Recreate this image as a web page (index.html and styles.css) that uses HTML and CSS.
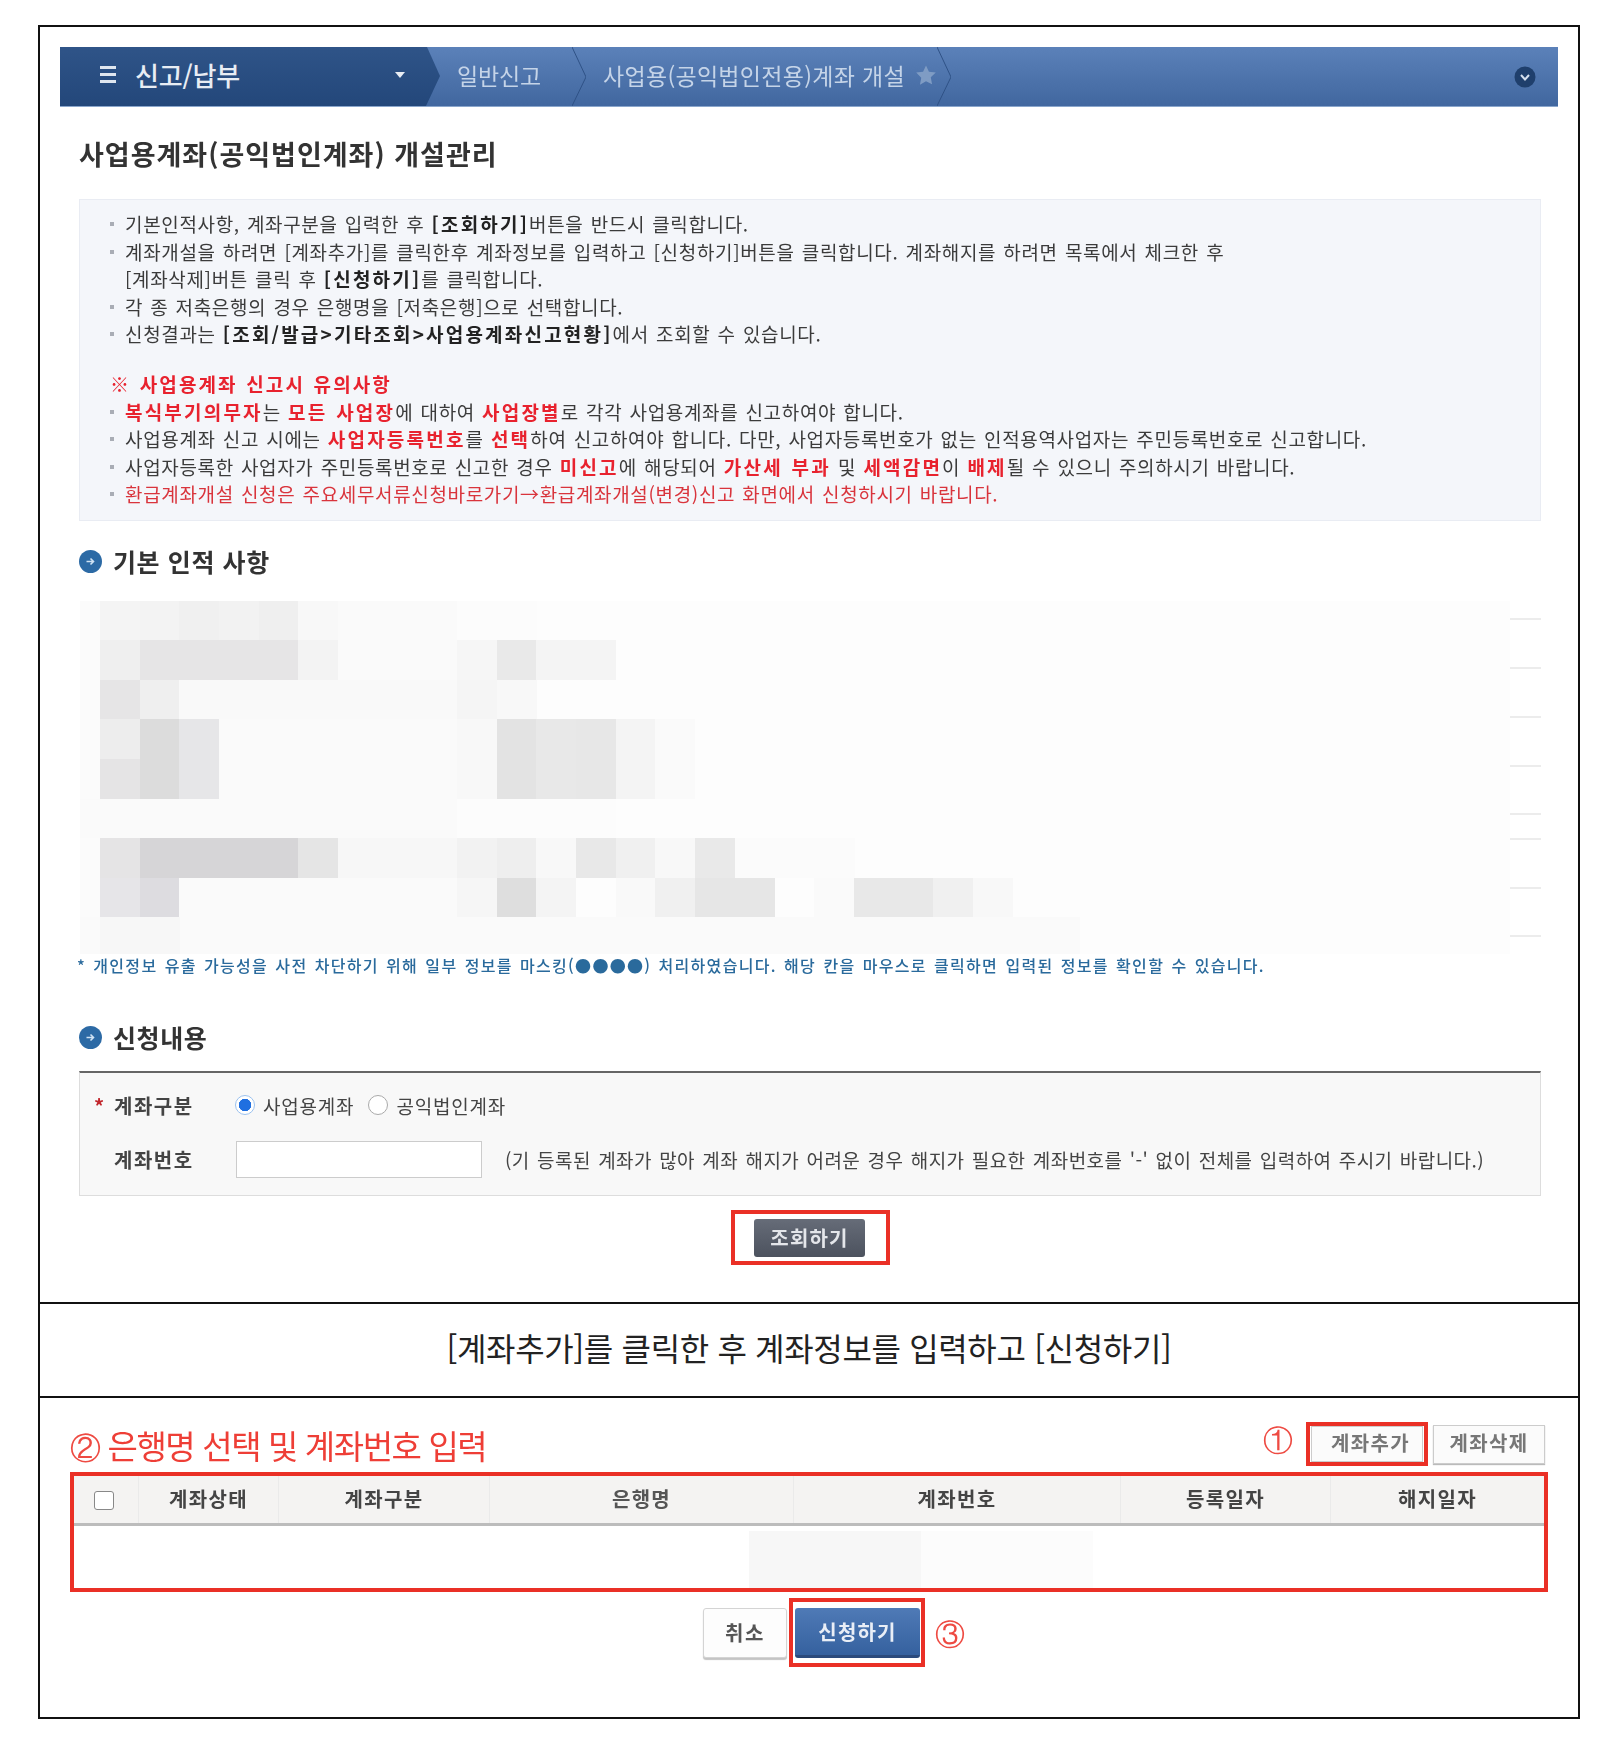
FILE: index.html
```html
<!DOCTYPE html>
<html lang="ko">
<head>
    <meta charset="UTF-8">
    <title>사업용계좌 개설관리</title>
    <link rel="stylesheet" href="styles.css">
</head>
<body>

    <div class="sheet">

        <!-- 조회 화면 -->
        <section class="panel panel-top">
            <nav class="nav">
                <div class="nav-head">
                    <span class="nav-burger"><i></i><i></i><i></i></span>
                    <span class="nav-title">신고/납부</span>
                    <span class="nav-caret"></span>
                </div>
                <div class="crumb crumb-one">
                    <span>일반신고</span>
                    <svg class="chev" viewBox="0 0 14 59"><path d="M0 0 L14 30 L0 59" fill="none" stroke="#2f5286" stroke-width="1"/></svg>
                </div>
                <div class="crumb crumb-two">
                    <span>사업용(공익법인전용)계좌 개설</span>
                    <svg class="star" viewBox="0 0 24 24"><path d="M12 1.5l3.2 6.9 7.5.9-5.5 5.2 1.4 7.5L12 18.8l-6.6 3.7 1.4-7.5L1.3 9.3l7.5-.9z" fill="#7f9cc4"/></svg>
                    <svg class="chev" viewBox="0 0 14 59"><path d="M0 0 L14 30 L0 59" fill="none" stroke="#2f5286" stroke-width="1"/></svg>
                </div>
                <span class="nav-toggle">
                    <svg viewBox="0 0 22 22"><circle cx="11" cy="11" r="10.5" fill="#1f3f6c"/><path d="M7 9l4 4.5L15 9" fill="none" stroke="#d5e0ee" stroke-width="2"/></svg>
                </span>
            </nav>

            <h1 class="page-title">사업용계좌(공익법인계좌) 개설관리</h1>

            <div class="info">
                <ul class="info-list">
                    <li>기본인적사항, 계좌구분을 입력한 후 <b>[조회하기]</b>버튼을 반드시 클릭합니다.</li>
                    <li>계좌개설을 하려면 [계좌추가]를 클릭한후 계좌정보를 입력하고 [신청하기]버튼을 클릭합니다. 계좌해지를 하려면 목록에서 체크한 후<br>[계좌삭제]버튼 클릭 후 <b>[신청하기]</b>를 클릭합니다.</li>
                    <li>각 종 저축은행의 경우 은행명을 [저축은행]으로 선택합니다.</li>
                    <li>신청결과는 <b>[조회/발급&gt;기타조회&gt;사업용계좌신고현황]</b>에서 조회할 수 있습니다.</li>
                </ul>
                <p class="info-head">※ 사업용계좌 신고시 유의사항</p>
                <ul class="info-list">
                    <li><em>복식부기의무자</em>는 <em>모든 사업장</em>에 대하여 <em>사업장별</em>로 각각 사업용계좌를 신고하여야 합니다.</li>
                    <li>사업용계좌 신고 시에는 <em>사업자등록번호</em>를 <em>선택</em>하여 신고하여야 합니다. 다만, 사업자등록번호가 없는 인적용역사업자는 주민등록번호로 신고합니다.</li>
                    <li>사업자등록한 사업자가 주민등록번호로 신고한 경우 <em>미신고</em>에 해당되어 <em>가산세 부과</em> 및 <em>세액감면</em>이 <em>배제</em>될 수 있으니 주의하시기 바랍니다.</li>
                    <li class="red-line">환급계좌개설 신청은 주요세무서류신청바로가기→환급계좌개설(변경)신고 화면에서 신청하시기 바랍니다.</li>
                </ul>
            </div>

            <h2 class="sec-title sec-first">
                <svg class="sec-icon" viewBox="0 0 23 23"><circle cx="11.5" cy="11.5" r="11.5" fill="#2c6aa5"/><path d="M7.5 11.5h7M11.5 8.5l3 3-3 3" fill="none" stroke="#cfe2f3" stroke-width="1.6"/></svg>
                기본 인적 사항
            </h2>

            <!-- 모자이크 처리된 인적사항 -->
            <svg class="mosaic" viewBox="0 0 1462 353">
                <rect x="1" width="1430" height="353" fill="#fdfdfd"/>
                <rect x="1" width="20" height="353" fill="#fbfbfb"/>
                <g fill="#f4f4f4"><rect x="21" y="0" width="40" height="39"/></g>
                <rect x="61" y="0" width="40" height="39" fill="#f3f3f3"/>
                <rect x="100" y="0" width="40" height="39" fill="#f0f0f0"/>
                <rect x="140" y="0" width="40" height="39" fill="#f2f2f2"/>
                <rect x="180" y="0" width="40" height="39" fill="#efefef"/>
                <rect x="219" y="0" width="40" height="39" fill="#f8f8f8"/>
                <rect x="259" y="0" width="120" height="39" fill="#fafafa"/>
                <rect x="378" y="0" width="80" height="39" fill="#fcfcfc"/>

                <rect x="21" y="39" width="40" height="40" fill="#efefef"/>
                <rect x="61" y="39" width="159" height="40" fill="#e6e5e6"/>
                <rect x="219" y="39" width="40" height="40" fill="#f3f3f3"/>
                <rect x="259" y="39" width="120" height="40" fill="#fafafa"/>
                <rect x="378" y="39" width="40" height="40" fill="#f6f6f6"/>
                <rect x="418" y="39" width="40" height="40" fill="#e9e9e9"/>
                <rect x="457" y="39" width="80" height="40" fill="#f4f4f4"/>

                <rect x="21" y="79" width="40" height="39" fill="#e6e5e6"/>
                <rect x="61" y="79" width="40" height="39" fill="#efefef"/>
                <rect x="100" y="79" width="279" height="39" fill="#f9f9f9"/>
                <rect x="378" y="79" width="40" height="39" fill="#f5f5f5"/>
                <rect x="418" y="79" width="40" height="39" fill="#f8f8f8"/>

                <rect x="21" y="118" width="40" height="40" fill="#ededed"/>
                <rect x="21" y="158" width="40" height="40" fill="#e5e4e5"/>
                <rect x="61" y="118" width="40" height="80" fill="#dcdcdc"/>
                <rect x="100" y="118" width="40" height="80" fill="#e6e6e8"/>
                <rect x="140" y="118" width="239" height="80" fill="#fafafa"/>
                <rect x="378" y="118" width="40" height="80" fill="#f8f8f8"/>
                <rect x="418" y="118" width="40" height="80" fill="#e3e3e3"/>
                <rect x="457" y="118" width="40" height="80" fill="#e8e8e8"/>
                <rect x="497" y="118" width="40" height="80" fill="#e7e7e7"/>
                <rect x="537" y="118" width="40" height="80" fill="#f4f4f4"/>
                <rect x="576" y="118" width="40" height="80" fill="#fafafa"/>

                <rect x="1" y="198" width="378" height="39" fill="#fafafa"/>
                <rect x="378" y="198" width="159" height="39" fill="#fcfcfc"/>

                <rect x="21" y="237" width="40" height="40" fill="#e5e4e5"/>
                <rect x="61" y="237" width="159" height="40" fill="#d6d5d7"/>
                <rect x="219" y="237" width="40" height="40" fill="#e5e5e5"/>
                <rect x="259" y="237" width="120" height="40" fill="#f7f7f7"/>
                <rect x="378" y="237" width="40" height="40" fill="#f2f2f2"/>
                <rect x="418" y="237" width="40" height="40" fill="#eeeeee"/>
                <rect x="457" y="237" width="40" height="40" fill="#f8f8f8"/>
                <rect x="497" y="237" width="40" height="40" fill="#e8e8e8"/>
                <rect x="537" y="237" width="40" height="40" fill="#f0f0f0"/>
                <rect x="576" y="237" width="40" height="40" fill="#f8f8f8"/>
                <rect x="616" y="237" width="40" height="40" fill="#e9e9e9"/>
                <rect x="656" y="237" width="120" height="40" fill="#fbfbfb"/>

                <rect x="21" y="277" width="40" height="39" fill="#e6e5e8"/>
                <rect x="61" y="277" width="40" height="39" fill="#dddce0"/>
                <rect x="100" y="277" width="279" height="39" fill="#fafafa"/>
                <rect x="378" y="277" width="40" height="39" fill="#f6f6f6"/>
                <rect x="418" y="277" width="40" height="39" fill="#dedede"/>
                <rect x="457" y="277" width="40" height="39" fill="#f4f4f4"/>
                <rect x="537" y="277" width="40" height="39" fill="#f9f9f9"/>
                <rect x="576" y="277" width="40" height="39" fill="#f0f0f0"/>
                <rect x="616" y="277" width="80" height="39" fill="#e6e6e6"/>
                <rect x="735" y="277" width="40" height="39" fill="#fafafa"/>
                <rect x="775" y="277" width="79" height="39" fill="#e8e8e8"/>
                <rect x="854" y="277" width="40" height="39" fill="#f0f0f0"/>
                <rect x="894" y="277" width="40" height="39" fill="#f8f8f8"/>

                <rect x="1" y="316" width="1000" height="37" fill="#fafafa"/>
                <rect x="21" y="316" width="80" height="37" fill="#f7f7f7"/>

                <g stroke="#e6e6e6" stroke-width="1.5">
                    <path d="M1431 18h31M1431 67h31M1431 116h31M1431 165h31M1431 213h31M1431 238h31M1431 287h31M1431 335h31"/>
                </g>
            </svg>

            <p class="mask-note">* 개인정보 유출 가능성을 사전 차단하기 위해 일부 정보를 마스킹(●●●●) 처리하였습니다. 해당 칸을 마우스로 클릭하면 입력된 정보를 확인할 수 있습니다.</p>

            <h2 class="sec-title sec-second">
                <svg class="sec-icon" viewBox="0 0 23 23"><circle cx="11.5" cy="11.5" r="11.5" fill="#2c6aa5"/><path d="M7.5 11.5h7M11.5 8.5l3 3-3 3" fill="none" stroke="#cfe2f3" stroke-width="1.6"/></svg>
                신청내용
            </h2>

            <div class="form-box">
                <div class="form-row">
                    <label class="form-label"><span class="req">*</span>계좌구분</label>
                    <span class="radio radio-on"></span><span class="radio-text">사업용계좌</span>
                    <span class="radio"></span><span class="radio-text">공익법인계좌</span>
                </div>
                <div class="form-row">
                    <label class="form-label">계좌번호</label>
                    <span class="acct-input"></span>
                    <span class="form-hint">(기 등록된 계좌가 많아 계좌 해지가 어려운 경우 해지가 필요한 계좌번호를 '-' 없이 전체를 입력하여 주시기 바랍니다.)</span>
                </div>
            </div>

            <div class="search-wrap">
                <span class="red-box search-box"><button class="btn-dark">조회하기</button></span>
            </div>
        </section>

        <section class="panel panel-caption">[계좌추가]를 클릭한 후 계좌정보를 입력하고 [신청하기]</section>

        <!-- 계좌 입력 화면 -->
        <section class="panel panel-bottom">
            <div class="tools">
                <h3 class="step-title"><span class="num">②</span> 은행명 선택 및 계좌번호 입력</h3>
                <span class="num num-tool">①</span>
                <span class="red-box add-box"><button class="btn-light">계좌추가</button></span>
                <button class="btn-light btn-del">계좌삭제</button>
            </div>

            <div class="red-box acct-table">
                <div class="acct-head">
                    <div class="col col-check"><span class="check"></span></div>
                    <div class="col col-a">계좌상태</div>
                    <div class="col col-b">계좌구분</div>
                    <div class="col col-c">은행명</div>
                    <div class="col col-d">계좌번호</div>
                    <div class="col col-e">등록일자</div>
                    <div class="col col-f">해지일자</div>
                </div>
                <div class="acct-body">
                    <span class="smudge smudge-dark"></span>
                    <span class="smudge smudge-pale"></span>
                </div>
            </div>

            <div class="actions">
                <button class="btn-cancel">취소</button>
                <span class="red-box apply-box"><button class="btn-apply">신청하기</button></span>
                <span class="num num-apply">③</span>
            </div>
        </section>

    </div>

</body>
</html>
```

FILE: styles.css
```css
* {
    margin: 0;
    padding: 0;
    box-sizing: border-box;
}

body {
    background: #fff;
    font-family: "Noto Sans CJK KR", "Noto Sans", sans-serif;
    color: #333;
}

.sheet {
    width: 1542px;
    height: 1694px;
    margin: 25px 0 0 38px;
    border: 2px solid #111;
}

/* 캡처 이미지처럼 살짝 흐리게 */
.panel-top,
.panel-bottom > * {
    filter: blur(.6px);
}

.panel-top {
    height: 1275px;
    padding: 20px 0 0 40px;
}

.panel-caption {
    height: 96px;
    border-top: 2px solid #111;
    border-bottom: 2px solid #111;
    text-align: center;
    font-size: 32px;
    line-height: 87px;
    color: #222;
    letter-spacing: -0.35px;
}

.panel-bottom {
    padding: 24px 0 0 30px;
}

/* 상단 메뉴 */
.nav {
    display: flex;
    width: 1498px;
    height: 60px;
    margin-left: -20px;
    background: linear-gradient(#5b81b9, #41679f);
    border-bottom: 1px solid #8aa6cc;
    position: relative;
}

.nav-head {
    display: flex;
    align-items: center;
    flex: none;
    width: 380px;
    height: 59px;
    padding: 0 0 4px 40px;
    background: linear-gradient(#2f5488, #23477a);
    clip-path: polygon(0 0, 367px 0, 380px 29px, 366px 100%, 0 100%);
}

.nav-burger {
    display: flex;
    flex-direction: column;
    gap: 4px;
    width: 16px;
}
.nav-burger i {
    display: block;
    height: 3px;
    background: #dfe6ef;
}

.nav-title {
    margin-left: 19px;
    color: #e8edf4;
    font-size: 26px;
    font-weight: 500;
    letter-spacing: -0.2px;
}

.nav-caret {
    margin-left: 155px;
    border-top: 6px solid #e8edf4;
    border-left: 5px solid transparent;
    border-right: 5px solid transparent;
}

.crumb {
    display: flex;
    align-items: center;
    color: #c5d4e8;
    font-size: 23px;
    height: 59px;
    padding-bottom: 4px;
    position: relative;
}
.crumb-one {
    width: 132px;
    padding-left: 17px;
    letter-spacing: -0.2px;
}
.crumb-two {
    width: 365px;
    padding-left: 31px;
    letter-spacing: 0.3px;
}

.chev {
    position: absolute;
    right: -14px;
    top: 0;
    width: 14px;
    height: 59px;
}

.star {
    width: 22px;
    height: 22px;
    margin-left: 10px;
}

.nav-toggle {
    margin-left: auto;
    margin-right: 22px;
    align-self: center;
    width: 22px;
    height: 22px;
}

/* 제목 */
.page-title {
    margin: 32px 0 0 -1px;
    height: 30px;
    font-size: 27px;
    font-weight: 700;
    line-height: 30px;
    color: #333;
    letter-spacing: 1px;
}

/* 안내 박스 */
.info {
    width: 1462px;
    height: 322px;
    margin: 30px 0 0 -1px;
    padding: 10px 0 0 30px;
    background: #f4f6fa;
    border: 1px solid #e9ecf3;
    font-size: 19px;
    line-height: 27.5px;
    color: #3b3b3b;
    letter-spacing: 0.65px;
    word-spacing: 1.2px;
}

.info-list {
    list-style: none;
}
.info-list li {
    position: relative;
    padding-left: 15px;
}
.info-list li::before {
    content: "";
    position: absolute;
    left: 0;
    top: 12px;
    width: 4px;
    height: 4px;
    background: #a9adb5;
}
.info-list b {
    font-weight: 700;
    color: #222;
    letter-spacing: 2.2px;
}
.info-list em {
    font-style: normal;
    font-weight: 700;
    color: #e8222e;
    letter-spacing: 2.2px;
}
.red-line {
    color: #d9343c;
}

.info-head {
    margin-top: 22.5px;
    color: #e8222e;
    font-weight: 700;
    letter-spacing: 2.1px;
}

/* 섹션 제목 */
.sec-title {
    display: flex;
    align-items: center;
    gap: 11px;
    height: 30px;
    margin-left: -1px;
    font-size: 25px;
    font-weight: 700;
    color: #333;
    letter-spacing: 0.6px;
}
.sec-first {
    margin-top: 25px;
}
.sec-second {
    margin-top: 47px;
}
.sec-icon {
    width: 23px;
    height: 23px;
    flex: none;
}

.mosaic {
    display: block;
    width: 1462px;
    height: 353px;
    margin: 25px 0 0 -1px;
}

.mask-note {
    height: 20px;
    margin: 1px 0 0 -3px;
    font-size: 16px;
    font-weight: 500;
    line-height: 20px;
    color: #2a6a9c;
    letter-spacing: 1.3px;
    word-spacing: 1.5px;
}

/* 입력 폼 */
.form-box {
    width: 1462px;
    height: 125px;
    margin: 19px 0 0 -1px;
    padding-top: 12px;
    background: #f8f8f8;
    border: 1px solid #ddd;
    border-top: 2px solid #666;
}

.form-row {
    display: flex;
    align-items: center;
    height: 40px;
    color: #444;
    font-size: 19px;
    letter-spacing: 0.8px;
}
.form-row + .form-row {
    margin-top: 14px;
}

.form-label {
    position: relative;
    width: 156px;
    padding-left: 34px;
    font-size: 20px;
    font-weight: 700;
    letter-spacing: 1.5px;
}
.req {
    position: absolute;
    left: 14px;
    color: #c2272d;
}

.radio {
    width: 20px;
    height: 20px;
    border-radius: 50%;
    border: 1.5px solid #aaa;
    background: #fff;
}
.radio-on {
    margin-left: -1px;
    border-color: #9cc2ef;
    background: radial-gradient(circle, #1f6fe0 0 6px, #fff 6.5px);
}
.radio-text {
    margin: 0 14px 0 8px;
}

.acct-input {
    width: 246px;
    height: 37px;
    background: #fff;
    border: 1.5px solid #ccc;
}

.form-hint {
    margin-left: 23px;
    letter-spacing: 0.45px;
    word-spacing: 1.5px;
}

/* 버튼 */
.red-box {
    display: inline-flex;
    border: 4px solid #ea3026;
}

.search-wrap {
    margin: 14px 0 0 651px;
    height: 55px;
}
.search-box {
    align-items: center;
    width: 159px;
    height: 55px;
    padding-left: 19px;
}

button {
    font-family: inherit;
    cursor: pointer;
}

.btn-dark {
    width: 111px;
    height: 38px;
    border: 0;
    border-radius: 3px;
    background: linear-gradient(#666c78, #4c525e);
    color: #e4e6ea;
    font-size: 20px;
    font-weight: 700;
    letter-spacing: 1.2px;
}

.tools {
    display: flex;
    align-items: center;
    width: 1478px;
    height: 44px;
    padding-right: 3px;
}

.step-title {
    flex: 1;
    color: #ee3e36;
    font-size: 33px;
    font-weight: 400;
    letter-spacing: -1.4px;
    line-height: 44px;
    margin-top: 5px;
}

.num {
    font-family: "Liberation Serif", "DejaVu Serif", serif;
    color: #ee4a42;
}
.step-title .num {
    font-size: 31px;
}
.num-tool {
    font-size: 30px;
    margin: 0 13px 6px 0;
}

.btn-light {
    width: 112px;
    height: 36px;
    padding-bottom: 3px;
    border: 1px solid #ccc;
    background: #fbfbfb;
    color: #777;
    font-size: 20px;
    font-weight: 700;
    letter-spacing: 1.3px;
}

.add-box {
    align-items: center;
    width: 122px;
    height: 44px;
    padding-left: 1px;
}
.add-box .btn-light {
    padding-left: 7px;
}
.btn-del {
    height: 39px;
    margin-left: 5px;
    box-shadow: 0 1px 1px #bbb;
}

/* 계좌 표 */
.acct-table {
    display: block;
    width: 1478px;
    height: 120px;
    margin-top: 6px;
}

.acct-head {
    display: flex;
    height: 50px;
    background: #f4f3f2;
    border-bottom: 3px solid #bcbcbc;
}

.col {
    display: flex;
    align-items: center;
    justify-content: center;
    padding-bottom: 2px;
    border-right: 1px solid #eaeaea;
    color: #444;
    font-size: 20px;
    font-weight: 700;
    letter-spacing: 1.3px;
}
.col-check { width: 65px; }
.col-a { width: 140px; }
.col-b { width: 211px; }
.col-c { width: 304px; color: #555; }
.col-d { width: 327px; }
.col-e { width: 210px; }
.col-f { flex: 1; border-right: 0; }

.check {
    width: 20px;
    height: 19px;
    margin: 3px 4px 0 0;
    background: #fff;
    border: 1.5px solid #888;
    border-radius: 3px;
}

.acct-body {
    display: flex;
    height: 57px;
    margin-top: 5px;
    padding-left: 675px;
}
.smudge {
    height: 57px;
}
.smudge-dark {
    width: 172px;
    background: #f7f7f7;
}
.smudge-pale {
    width: 172px;
    background: #fcfcfc;
}

.actions {
    display: flex;
    align-items: center;
    height: 69px;
    margin-top: 6px;
    padding-left: 633px;
}

.btn-cancel {
    width: 84px;
    height: 50px;
    background: #fdfdfd;
    border: 1px solid #d4d4d4;
    border-radius: 3px;
    box-shadow: 0 2px 1px #c4c4c4;
    color: #555;
    font-size: 20px;
    font-weight: 700;
    letter-spacing: 1.5px;
}

.apply-box {
    align-items: center;
    width: 136px;
    height: 69px;
    margin-left: 2px;
    padding-left: 2px;
}

.btn-apply {
    width: 125px;
    height: 50px;
    border: 0;
    border-radius: 3px;
    border-bottom: 3px solid #2b4a7c;
    background: linear-gradient(#4f7ab6, #35619f);
    color: #e9eef6;
    font-size: 20px;
    font-weight: 700;
    letter-spacing: 1.2px;
}

.num-apply {
    margin: 6px 0 0 10px;
    font-size: 30px;
}
```
